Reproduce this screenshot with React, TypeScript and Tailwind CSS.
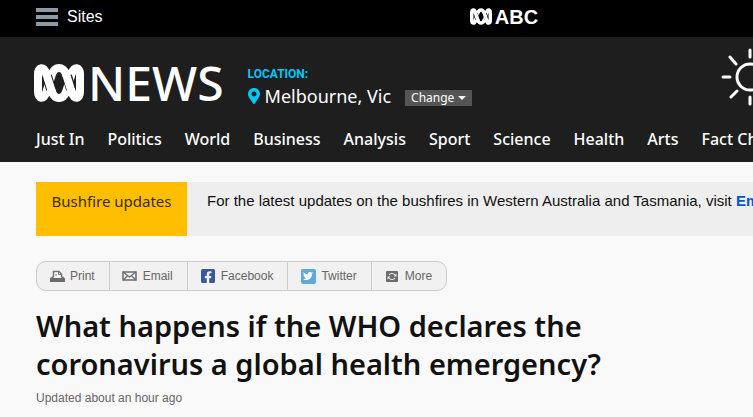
import React from "react";
import { FaFacebookSquare, FaMapMarkerAlt, FaTwitter } from "react-icons/fa";

const sections = ["Just In", "Politics", "World", "Business", "Analysis", "Sport", "Science", "Health", "Arts", "Fact Check"];

function AbcMark({ className, gap }: { className: string; gap: string }) {
  return (
    <svg viewBox="0 0 50 38" className={className} fill="none" aria-hidden="true">
      <path
        d="M4 10C4 3 10 2 12 9L18 28C21 36 29 36 32 28L38 9C40 2 46 3 46 10V28C46 35 40 36 38 29L32 10C29 2 21 2 18 10L12 29C10 36 4 35 4 28Z"
        stroke="#fff"
        strokeWidth="8"
        strokeLinejoin="round"
      />
      <path d="M13 12L17 25M33 12L37 25" stroke={gap} strokeWidth="10" />
      <path d="M12 9L18 28M32 10L38 29" stroke="#fff" strokeWidth="8" />
    </svg>
  );
}

function PrintIcon() {
  return (
    <svg viewBox="0 0 15 12" className="h-3 w-[15px]" aria-hidden="true">
      <path d="M3.500 7V1.500H9L11.500 4V7" fill="#fff" stroke="#777" strokeWidth="1.500" />
      <path d="M8.500 1.500V4.500H11.500M5 5H7" fill="none" stroke="#777" />
      <path d="M2 6.500H3.500V8H11.500V6.500H13L15 8.500V12H0V8.500Z" fill="#6c6c6c" />
    </svg>
  );
}

function EmailIcon() {
  return (
    <svg viewBox="0 0 15 10" className="h-[10px] w-[15px]" fill="none" stroke="#6c6c6c" aria-hidden="true">
      <path d="M1 1H14V9H1Z" strokeWidth="1.500" />
      <path d="M1 1L7.500 6L14 1M1 9L5.500 5M14 9L9.500 5" strokeWidth="1.200" />
    </svg>
  );
}

function MoreIcon() {
  return (
    <svg viewBox="0 0 12 11" className="h-[11px] w-3" fill="none" aria-hidden="true">
      <rect width="12" height="11" rx="1" fill="#6c6c6c" />
      <path d="M3 4C4.500 2 7.500 2 9 4M9 7C7.500 9 4.500 9 3 7" stroke="#eee" strokeWidth="1.200" />
      <path d="M10.500 2.500V5.500H7.500ZM1.500 8.500V5.500H4.500Z" fill="#eee" />
    </svg>
  );
}

function SunIcon() {
  return (
    <svg viewBox="0 0 60 60" className="h-[60px] w-[60px]" fill="none" stroke="#fff" strokeWidth="3" strokeLinecap="round" aria-label="Sunny">
      <circle cx="29" cy="30" r="13" />
      <path d="M2 30H9M49 30H56M29 3V10M29 50V57M9 10L15 17M43 43L49 50M10 50L16 44M43 17L49 10" />
    </svg>
  );
}

const shareLinks = [
  { label: "Print", icon: <PrintIcon /> },
  { label: "Email", icon: <EmailIcon /> },
  { label: "Facebook", icon: <FaFacebookSquare className="size-4 text-[#3b5998]" /> },
  {
    label: "Twitter",
    icon: (
      <span className="flex size-[15px] items-center justify-center rounded-xs bg-[#5ea9dd]">
        <FaTwitter className="size-[10px] text-white" />
      </span>
    ),
  },
  { label: "More", icon: <MoreIcon /> },
];

export default function App() {
  return (
    <div className="min-h-screen overflow-hidden bg-[#f9f9f9] font-['Liberation_Sans',Arial,sans-serif] text-[#111]">
      <div className="grid h-[37px] grid-cols-[2fr_auto_1fr] items-center bg-black pl-9 text-white">
        <button className="flex items-center gap-[9px] pb-1 text-base leading-6">
          <svg viewBox="0 0 22 18" className="h-[18px] w-[22px]" fill="#8a9aa8" aria-hidden="true">
            <path d="M0 0H22V4H0ZM0 7H22V11H0ZM0 14H22V18H0Z" />
          </svg>
          Sites
        </button>
        <a href="#" className="ml-1 flex items-center gap-[3px] pb-1 text-[20px] leading-6 font-bold">
          <AbcMark className="h-[17px] w-[22px]" gap="#000" />
          ABC
        </a>
      </div>

      <header className="bg-[#1e1e1e] pl-9 font-['Noto_Sans',sans-serif] text-white">
        <div className="flex h-20 items-center">
          <a href="#" className="-ml-[2px] flex shrink-0 items-center gap-1 pt-3">
            <AbcMark className="h-[38px] w-[50px]" gap="#1e1e1e" />
            <span className="text-5xl leading-10 font-medium">NEWS</span>
          </a>
          <div className="ml-6 shrink-0 pt-5">
            <p className="font-['Roboto',sans-serif] text-xs leading-4 font-bold text-[#00c8f8]">LOCATION:</p>
            <div className="flex items-center pt-[2px]">
              <FaMapMarkerAlt className="h-4 w-3 text-[#00c8f8]" aria-hidden="true" />
              <span className="ml-[5px] text-lg leading-6">Melbourne, Vic</span>
              <button className="mt-1 ml-[14px] flex h-4 items-center gap-1 bg-[#555] px-[6px] text-xs">
                Change
                <svg viewBox="0 0 8 4" className="h-1 w-2" fill="#fff" aria-hidden="true">
                  <path d="M0 0H8L4 4Z" />
                </svg>
              </button>
            </div>
          </div>
          <a href="#" className="-mr-7 ml-auto shrink-0">
            <SunIcon />
          </a>
        </div>
        <nav aria-label="News sections" className="flex h-[45px] gap-[23px] pt-[10px] text-base leading-6 font-medium whitespace-nowrap">
          {sections.map((section) => (
            <a key={section} href="#">{section}</a>
          ))}
        </nav>
      </header>

      <main className="pt-5 pl-9">
        <section className="flex h-[54px] bg-[#eee] text-[15px] leading-5 whitespace-nowrap">
          <h2 className="w-[151px] shrink-0 bg-[#ffbe00] pt-[9px] text-center font-['Noto_Sans',sans-serif] text-[#3a2c08]">
            Bushfire updates
          </h2>
          <p className="grow pt-[9px] pl-5">
            For the latest updates on the bushfires in Western Australia and Tasmania, visit{" "}
            <a href="#" className="font-bold text-[#0058cc]">Emergency WA</a>
          </p>
        </section>

        <ul className="mt-[25px] flex h-[30px] w-fit divide-x divide-[#ccc] rounded-[10px] border border-[#ccc] bg-[#f1f1f1] text-xs text-[#666]">
          {shareLinks.map(({ label, icon }) => (
            <li key={label} className="flex">
              <a href="#" className="flex items-center pr-[14px] pl-3">
                <span className="mr-[5px] flex w-4 justify-center">{icon}</span>
                {label}
              </a>
            </li>
          ))}
        </ul>

        <article>
          <h1 className="max-w-[600px] pt-4 font-['Noto_Sans',sans-serif] text-[29px] leading-[38px] font-semibold">
            What happens if the WHO declares the coronavirus a global health emergency?
          </h1>
          <p className="pt-[7px] text-xs leading-4 text-[#666]">Updated about an hour ago</p>
        </article>
      </main>
    </div>
  );
}
